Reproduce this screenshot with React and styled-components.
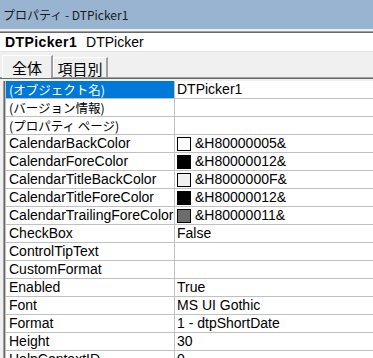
import React from "react";
import styled, { createGlobalStyle } from "styled-components";

const GlobalStyle = createGlobalStyle`
  html, body {
    margin: 0;
    padding: 0;
    background: #f0f0f0;
  }
  body {
    width: 373px;
    height: 358px;
    overflow: hidden;
    font-family: "Noto Sans CJK JP", "DejaVu Sans", sans-serif;
    font-size: 12px;
    color: #000;
  }
`;

const Window = styled.div`
  display: flex;
  flex-direction: column;
  width: 373px;
  height: 358px;
  overflow: hidden;
  background: #f0f0f0;
`;

const TitleBar = styled.div`
  display: flex;
  align-items: center;
  height: 29px;
  padding-left: 3px;
  background: #99b4d1;
  color: #1a1a1a;
  font-size: 12px;
  flex-shrink: 0;
`;

const Band = styled.div`
  height: ${(p) => p.h}px;
  flex-shrink: 0;
  background: #f0f0f0;
  border-bottom: 1px solid #a0a0a0;
  box-shadow: 0 1px 0 #696969;
`;

const ObjectBox = styled.div`
  display: flex;
  align-items: center;
  gap: 9px;
  height: 18px;
  margin-top: 1px;
  padding-left: 5px;
  background: #fff;
  border-bottom: 1px solid #e3e3e3;
  font-family: "Liberation Sans", "Noto Sans CJK JP", sans-serif;
  font-size: 14px;
  flex-shrink: 0;
`;

const ObjName = styled.span`
  font-weight: bold;
  letter-spacing: 0.4px;
`;

const TabStrip = styled.div`
  display: flex;
  align-items: flex-end;
  height: 25px;
  padding-left: 2px;
  flex-shrink: 0;
  border-bottom: 1px solid #a0a0a0;
  box-shadow: 0 1px 0 #696969;
`;

const Tab = styled.div`
  display: flex;
  align-items: center;
  justify-content: center;
  box-sizing: border-box;
  width: ${(p) => p.w}px;
  height: ${(p) => (p.active ? 23 : 20)}px;
  margin-bottom: ${(p) => (p.active ? -1 : 0)}px;
  padding-top: ${(p) => (p.active ? 0 : 2)}px;
  background: #f0f0f0;
  border-top: 1px solid #fff;
  border-left: 1px solid #fff;
  border-right: 2px solid #a0a0a0;
  font-size: 15px;
  position: relative;
  z-index: ${(p) => (p.active ? 1 : 0)};
`;

const Grid = styled.div`
  margin-top: 3px;
  margin-left: 3px;
  border-left: 1px solid #a0a0a0;
  box-shadow: inset 1px 0 0 #696969, inset 2px 0 0 #c0c0c0;
  padding-left: 2px;
  background: #fff;
  flex: 1;
`;

const Row = styled.div`
  display: grid;
  grid-template-columns: 169px 1fr;
  height: 18px;
  box-sizing: border-box;
  border-bottom: 1px solid #c0c0c0;
  font-family: "Liberation Sans", "Noto Sans CJK JP", sans-serif;
  font-size: 14px;
  line-height: 17px;
`;

const NameCell = styled.div`
  padding-left: 3px;
  white-space: nowrap;
  overflow: hidden;
  border-right: 1px solid #c0c0c0;
  background: ${(p) => (p.selected ? "#0078d7" : "#fff")};
  color: ${(p) => (p.selected ? "#fff" : "#000")};
  font-family: ${(p) =>
    p.jp ? '"Noto Sans CJK JP", sans-serif' : "inherit"};
  font-size: ${(p) => (p.jp ? "12.5px" : "inherit")};
`;

const ValueCell = styled.div`
  display: flex;
  align-items: center;
  gap: 4px;
  padding-left: 2px;
  white-space: nowrap;
  overflow: hidden;
`;

const Swatch = styled.span`
  width: 12px;
  height: 12px;
  border: 1px solid #000;
  background: ${(p) => p.color};
  flex-shrink: 0;
`;

const rows = [
  { name: "(オブジェクト名)", value: "DTPicker1", selected: true, jp: true },
  { name: "(バージョン情報)", value: "", jp: true },
  { name: "(プロパティ ページ)", value: "", jp: true },
  { name: "CalendarBackColor", value: "&H80000005&", color: "#ffffff" },
  { name: "CalendarForeColor", value: "&H80000012&", color: "#000000" },
  { name: "CalendarTitleBackColor", value: "&H8000000F&", color: "#f0f0f0" },
  { name: "CalendarTitleForeColor", value: "&H80000012&", color: "#000000" },
  { name: "CalendarTrailingForeColor", value: "&H80000011&", color: "#6d6d6d" },
  { name: "CheckBox", value: "False" },
  { name: "ControlTipText", value: "" },
  { name: "CustomFormat", value: "" },
  { name: "Enabled", value: "True" },
  { name: "Font", value: "MS UI Gothic" },
  { name: "Format", value: "1 - dtpShortDate" },
  { name: "Height", value: "30" },
  { name: "HelpContextID", value: "0" },
];

export default function App() {
  return (
    <>
      <GlobalStyle />
      <Window>
        <TitleBar>プロパティ - DTPicker1</TitleBar>
        <Band h={2} />
        <ObjectBox>
          <ObjName>DTPicker1</ObjName>
          <span>DTPicker</span>
        </ObjectBox>
        <TabStrip>
          <Tab active w={51}>全体</Tab>
          <Tab w={55}>項目別</Tab>
        </TabStrip>
        <Grid>
          {rows.map((r) => (
            <Row key={r.name}>
              <NameCell selected={r.selected} jp={r.jp}>
                {r.name}
              </NameCell>
              <ValueCell>
                {r.color && <Swatch color={r.color} />}
                {r.value}
              </ValueCell>
            </Row>
          ))}
        </Grid>
      </Window>
    </>
  );
}
